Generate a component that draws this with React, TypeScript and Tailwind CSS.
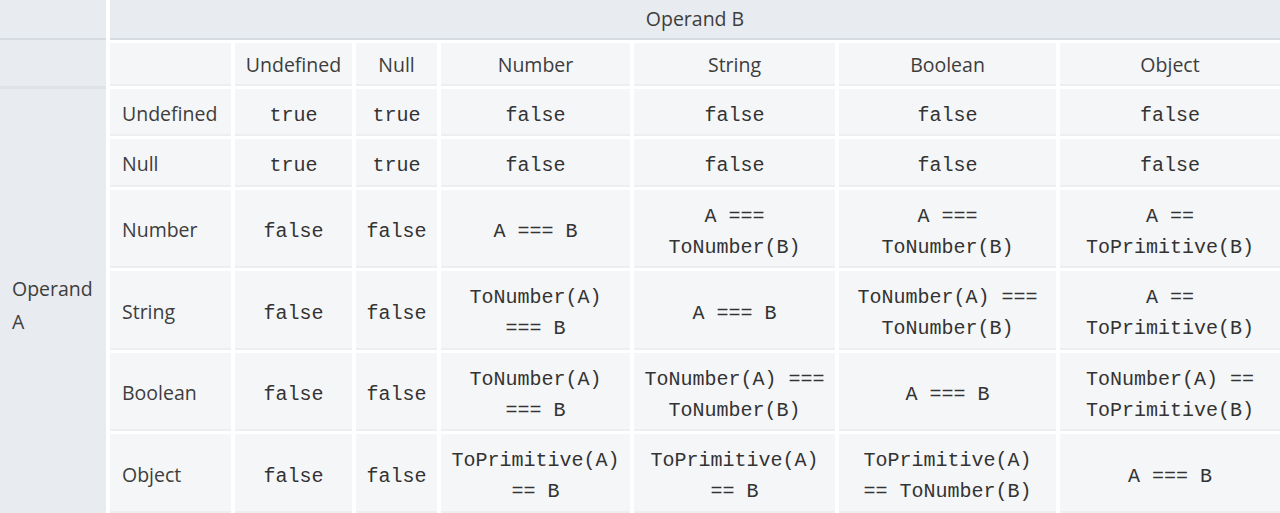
import React from "react";

const cols = ["Undefined", "Null", "Number", "String", "Boolean", "Object"];

const rows: { name: string; cells: string[][] }[] = [
  { name: "Undefined", cells: [["true"], ["true"], ["false"], ["false"], ["false"], ["false"]] },
  { name: "Null", cells: [["true"], ["true"], ["false"], ["false"], ["false"], ["false"]] },
  {
    name: "Number",
    cells: [["false"], ["false"], ["A === B"], ["A ===", "ToNumber(B)"], ["A ===", "ToNumber(B)"], ["A ==", "ToPrimitive(B)"]],
  },
  {
    name: "String",
    cells: [["false"], ["false"], ["ToNumber(A)", "=== B"], ["A === B"], ["ToNumber(A) ===", "ToNumber(B)"], ["A ==", "ToPrimitive(B)"]],
  },
  {
    name: "Boolean",
    cells: [["false"], ["false"], ["ToNumber(A)", "=== B"], ["ToNumber(A) ===", "ToNumber(B)"], ["A === B"], ["ToNumber(A) ==", "ToPrimitive(B)"]],
  },
  {
    name: "Object",
    cells: [["false"], ["false"], ["ToPrimitive(A)", "== B"], ["ToPrimitive(A)", "== B"], ["ToPrimitive(A)", "== ToNumber(B)"], ["A === B"]],
  },
];

export default function App() {
  return (
    <div className="flex w-[1280px] h-[513px] overflow-hidden bg-white font-['Open_Sans',sans-serif] text-[#3d3d3d] gap-x-[4px]">
      <div className="flex w-[106px] shrink-0 flex-col bg-[#e8ebef]">
        <div className="h-[40px] shrink-0 border-b-2 border-[#d6dbe2]" />
        <div className="h-[49px] shrink-0 border-b-[3px] border-[#dfe3e8]" />
        <div className="flex flex-1 items-center px-3 pt-[8px] text-[19.5px] leading-[33px]">
          <span>
            Operand
            <br />A
          </span>
        </div>
      </div>
      <div className="grid flex-1 grid-cols-[121px_117px_81px_189px_201px_217px_220px] grid-rows-[40px_43px_47px_48px_78px_79px_78px_79px] gap-x-[4px] gap-y-[3px]">
        <div className="col-span-7 flex items-center justify-center border-b-2 border-[#d6dbe2] bg-[#e8ebef] pb-[1px] text-[19.5px]">
          Operand B
        </div>
        <div className="border-b-2 border-[#eceef1] bg-[#f5f6f8]" />
        {cols.map((c) => (
          <div
            key={c}
            className="flex items-center justify-center border-b-2 border-[#eceef1] bg-[#f5f6f8] pt-[2px] text-[19.5px]"
          >
            {c}
          </div>
        ))}
        {rows.map((r) => (
          <React.Fragment key={r.name}>
            <div className="flex items-center border-b-2 border-[#eceef1] bg-[#f5f6f8] pl-3 pt-[4px] text-[19.5px]">
              {r.name}
            </div>
            {r.cells.map((lines, i) => (
              <div
                key={i}
                className="flex flex-col items-center justify-center border-b-2 border-[#eceef1] bg-[#f5f6f8] px-2 pt-[7px] font-['Liberation_Mono',monospace] text-[20px] leading-[31px] text-[#333]"
              >
                {lines.map((l, j) => (
                  <span key={j} className="whitespace-pre">
                    {l}
                  </span>
                ))}
              </div>
            ))}
          </React.Fragment>
        ))}
      </div>
    </div>
  );
}
